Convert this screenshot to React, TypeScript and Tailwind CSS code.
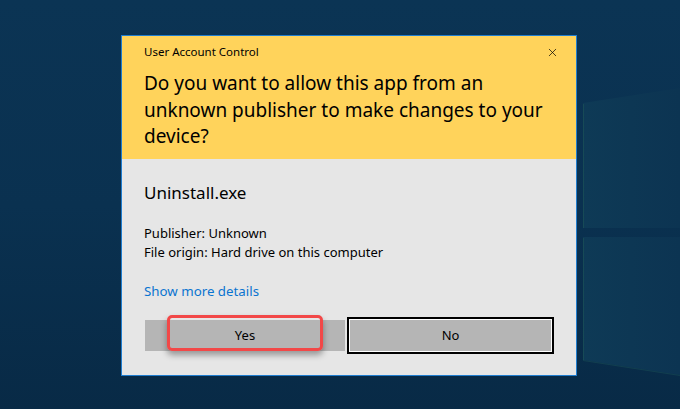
import { X } from "lucide-react";

const font = "font-['Noto_Sans','Open_Sans',sans-serif]";

const WindowsLogo = () => (
  <svg
    className="pointer-events-none absolute left-[576px] top-0 h-[409px] w-[104px]"
    viewBox="576 0 104 409"
  >
    <defs>
      <linearGradient id="pane" x1="0" y1="0" x2="1" y2="0">
        <stop offset="0" stopColor="#0e3a56" />
        <stop offset="1" stopColor="#0c3452" />
      </linearGradient>
    </defs>
    <polygon points="583,103 680,88 680,228 583,228" fill="url(#pane)" />
    <polygon points="583,237 680,237 680,375 583,360" fill="url(#pane)" />
    <line x1="583.5" y1="104" x2="583.5" y2="228" stroke="#1b5257" strokeWidth="1" opacity="0.7" />
    <line x1="583.5" y1="238" x2="583.5" y2="360" stroke="#1b5257" strokeWidth="1" opacity="0.7" />
    <line x1="583" y1="360.5" x2="680" y2="375.5" stroke="#1b5257" strokeWidth="1" opacity="0.5" />
  </svg>
);

export default function App() {
  return (
    <div
      className={`relative h-[409px] w-full overflow-hidden bg-gradient-to-b from-[#0b3454] via-[#0a3150] to-[#082a46] ${font}`}
    >
      <WindowsLogo />

      <div className="relative pl-[121px] pt-[35px]">
        <div className="w-[456px] border border-[#1f7dcf] bg-[#e6e6e6] text-black">
          {/* header */}
          <div className="h-[123px] bg-[#ffd35b] pl-[22px] pr-[17px] pt-[8px]">
            <div className="flex h-[16px] items-center justify-between">
              <span className="text-[11.5px] leading-[16px]">User Account Control</span>
              <X className="h-[13px] w-[13px]" strokeWidth={1.3} />
            </div>
            <h1 className="mt-[10px] text-[19px] font-normal leading-[26.5px]">
              Do you want to allow this app from an
              <br />
              unknown publisher to make changes to your
              <br />
              device?
            </h1>
          </div>

          {/* body */}
          <div className="pl-[22px] pr-[21px] pb-[21px] pt-[23px]">
            <div className="text-[17px] leading-[22px]">Uninstall.exe</div>

            <div className="mt-[20px] text-[13px] leading-[19px]">
              <div>Publisher: Unknown</div>
              <div>File origin: Hard drive on this computer</div>
            </div>

            <div className="mt-[20px] text-[13.3px] leading-[19px] text-[#0a74d0]">
              Show more details
            </div>

            <div className="mt-[16px] flex items-center gap-[2px]">
              <div className="relative ml-[1px] flex h-[31px] w-[200px] items-center justify-center bg-[#b5b5b5] text-[13px]">
                <span className="relative z-10">Yes</span>
                <div className="absolute left-[22px] top-[-5px] h-[36px] w-[156px] rounded-[5px] border-[3px] border-[#f24848] shadow-[0_4px_6px_rgba(0,0,0,0.35)]" />
              </div>
              <div className="flex h-[37px] w-[207px] items-center justify-center border-2 border-black bg-[#b5b5b5] text-[13px] shadow-[inset_0_0_0_1px_#ffffff]">
                No
              </div>
            </div>
          </div>
        </div>
      </div>
    </div>
  );
}
